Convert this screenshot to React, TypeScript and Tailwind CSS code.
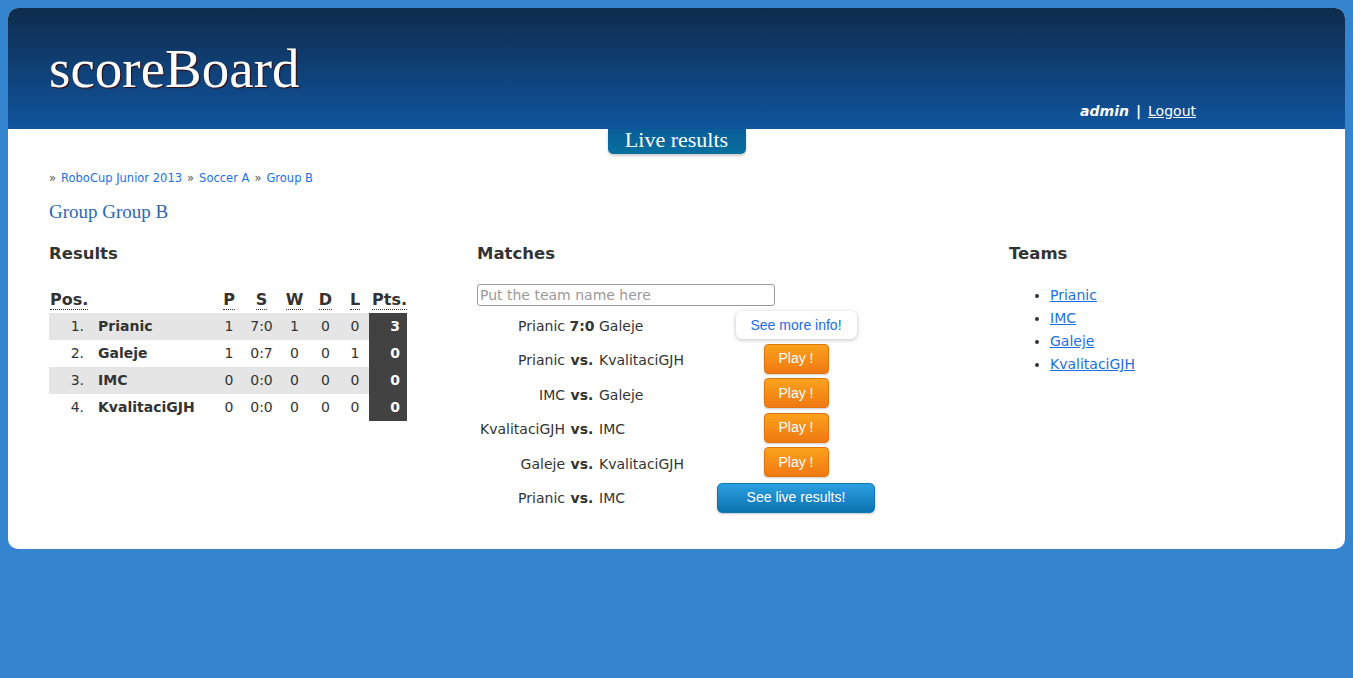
import React from "react";

const results = [
  { pos: 1, team: "Prianic", p: 1, s: "7:0", w: 1, d: 0, l: 0, pts: 3 },
  { pos: 2, team: "Galeje", p: 1, s: "0:7", w: 0, d: 0, l: 1, pts: 0 },
  { pos: 3, team: "IMC", p: 0, s: "0:0", w: 0, d: 0, l: 0, pts: 0 },
  { pos: 4, team: "KvalitaciGJH", p: 0, s: "0:0", w: 0, d: 0, l: 0, pts: 0 },
];

type Match = { home: string; mid: string; away: string; action: "info" | "play" | "live" };

const matches: Match[] = [
  { home: "Prianic", mid: "7:0", away: "Galeje", action: "info" },
  { home: "Prianic", mid: "vs.", away: "KvalitaciGJH", action: "play" },
  { home: "IMC", mid: "vs.", away: "Galeje", action: "play" },
  { home: "KvalitaciGJH", mid: "vs.", away: "IMC", action: "play" },
  { home: "Galeje", mid: "vs.", away: "KvalitaciGJH", action: "play" },
  { home: "Prianic", mid: "vs.", away: "IMC", action: "live" },
];

const teams = ["Prianic", "IMC", "Galeje", "KvalitaciGJH"];

const Abbr = ({ children }: { children: React.ReactNode }) => (
  <span className="inline-block border-b border-dotted border-[#333] leading-[18px]">{children}</span>
);

const ActionButton = ({ action }: { action: Match["action"] }) => {
  if (action === "info") {
    return (
      <button className="mb-[2px] h-[28px] w-[121px] rounded-[6px] bg-white text-[14px] text-[#1a6de0] shadow-[0_1px_4px_rgba(0,0,0,0.25)] font-['Liberation_Sans',sans-serif]">
        See more info!
      </button>
    );
  }
  if (action === "play") {
    return (
      <button className="mb-[4px] h-[30px] w-[65px] rounded-[4px] border border-[#e0750f] bg-gradient-to-b from-[#faa21c] to-[#f07812] text-[14px] text-white shadow-[0_1px_2px_rgba(0,0,0,0.2)] font-['Liberation_Sans',sans-serif]">
        Play !
      </button>
    );
  }
  return (
    <button className="mb-[2px] h-[30px] w-[158px] rounded-[5px] border border-[#0d78b6] bg-gradient-to-b from-[#2ba0e2] to-[#0a72ae] text-[14px] text-white shadow-[0_1px_2px_rgba(0,0,0,0.25)] font-['Liberation_Sans',sans-serif]">
      See live results!
    </button>
  );
};

const Sep = () => <span className="mx-[5px] text-[#555]">»</span>;

export default function App() {
  return (
    <div className="min-h-screen bg-[#3584d0] p-2 font-['DejaVu_Sans',sans-serif] text-[#333]">
      <div className="overflow-hidden rounded-[10px] bg-white">
        {/* Header */}
        <header className="flex h-[121px] items-end justify-between bg-gradient-to-b from-[#0e2c4e] to-[#0f559f] pl-[41px] pr-[149px]">
          <h1 className="mb-[30px] font-['Liberation_Serif',serif] text-[55px] leading-[60px] text-white [text-shadow:1px_1px_1px_#3a0a0a]">
            scoreBoard
          </h1>
          <div className="mb-[7px] flex items-center text-[14px] text-white">
            <span className="font-bold italic">admin</span>
            <span className="mx-[7px] font-bold">|</span>
            <a href="#" className="underline">Logout</a>
          </div>
        </header>

        {/* Live results tab */}
        <div className="flex justify-center">
          <div className="flex h-[25px] w-[138px] items-center justify-center rounded-b-[5px] bg-gradient-to-b from-[#0b5d98] to-[#06709f] pb-[5px] font-['Liberation_Serif',serif] text-[22px] text-white shadow-[0_2px_3px_rgba(0,0,0,0.2)]">
            Live results
          </div>
        </div>

        <main className="pl-[41px] pb-[33px]">
          {/* Breadcrumb */}
          <nav className="mt-[16px] text-[11.5px] leading-[16px]">
            <span className="mr-[5px] text-[#555]">»</span>
            <a href="#" className="text-[#1c6fe0]">RoboCup Junior 2013</a>
            <Sep />
            <a href="#" className="text-[#1c6fe0]">Soccer A</a>
            <Sep />
            <a href="#" className="text-[#1c6fe0]">Group B</a>
          </nav>

          <h2 className="mt-[14px] font-['Liberation_Serif',serif] text-[19px] leading-[24px] text-[#2a68b5]">Group Group B</h2>

          <div className="mt-[20px] grid grid-cols-[428px_532px_1fr]">
            {/* Results */}
            <section>
              <h3 className="text-[16.5px] font-bold leading-[20px]">Results</h3>
              <table className="mt-[24px] table-fixed border-collapse text-[14px]">
                <colgroup>
                  <col className="w-[43px]" />
                  <col className="w-[122px]" />
                  <col className="w-[30px]" />
                  <col className="w-[35px]" />
                  <col className="w-[31px]" />
                  <col className="w-[31px]" />
                  <col className="w-[28px]" />
                  <col className="w-[38px]" />
                </colgroup>
                <thead>
                  <tr className="h-[25px] text-[16px] font-bold">
                    <th className="p-0 pl-[1px] text-left align-top"><Abbr>Pos.</Abbr></th>
                    <th className="p-0"></th>
                    <th className="p-0 align-top"><Abbr>P</Abbr></th>
                    <th className="p-0 align-top"><Abbr>S</Abbr></th>
                    <th className="p-0 align-top"><Abbr>W</Abbr></th>
                    <th className="p-0 align-top"><Abbr>D</Abbr></th>
                    <th className="p-0 align-top"><Abbr>L</Abbr></th>
                    <th className="p-0 text-right align-top"><Abbr>Pts.</Abbr></th>
                  </tr>
                </thead>
                <tbody>
                  {results.map((r, i) => (
                    <tr key={r.pos} className={`h-[27px] ${i % 2 === 0 ? "bg-[#e5e5e5]" : "bg-white"}`}>
                      <td className="p-0 pr-[8px] text-right">{r.pos}.</td>
                      <td className="p-0 pl-[6px] font-bold">{r.team}</td>
                      <td className="p-0 text-center">{r.p}</td>
                      <td className="p-0 text-center">{r.s}</td>
                      <td className="p-0 text-center">{r.w}</td>
                      <td className="p-0 text-center">{r.d}</td>
                      <td className="p-0 text-center">{r.l}</td>
                      <td className="bg-[#424242] p-0 pr-[7px] text-right font-bold text-white">{r.pts}</td>
                    </tr>
                  ))}
                </tbody>
              </table>
            </section>

            {/* Matches */}
            <section>
              <h3 className="text-[16.5px] font-bold leading-[20px]">Matches</h3>
              <input
                placeholder="Put the team name here"
                className="mt-[20px] h-[22px] w-[298px] rounded-[3px] border border-[#9a9a9a] px-[2px] text-[14px] text-[#333] outline-none placeholder:text-[#9a9a9a]"
              />
              <div className="mt-[2px] grid grid-cols-[88px_34px_106px_182px] text-[14px]">
                {matches.map((m, i) => (
                  <React.Fragment key={i}>
                    <div className="flex h-[34.5px] items-center justify-end">{m.home}</div>
                    <div className="flex h-[34.5px] items-center justify-center font-bold">{m.mid}</div>
                    <div className="flex h-[34.5px] items-center">{m.away}</div>
                    <div className="flex h-[34.5px] items-center justify-center">
                      <ActionButton action={m.action} />
                    </div>
                  </React.Fragment>
                ))}
              </div>
            </section>

            {/* Teams */}
            <section>
              <h3 className="text-[16.5px] font-bold leading-[20px]">Teams</h3>
              <ul className="mt-[20px] list-disc pl-[41px] text-[14px] leading-[23px] marker:text-[#333]">
                {teams.map((t) => (
                  <li key={t}>
                    <a href="#" className="text-[#1c6fe0] underline">{t}</a>
                  </li>
                ))}
              </ul>
            </section>
          </div>
        </main>
      </div>
    </div>
  );
}
